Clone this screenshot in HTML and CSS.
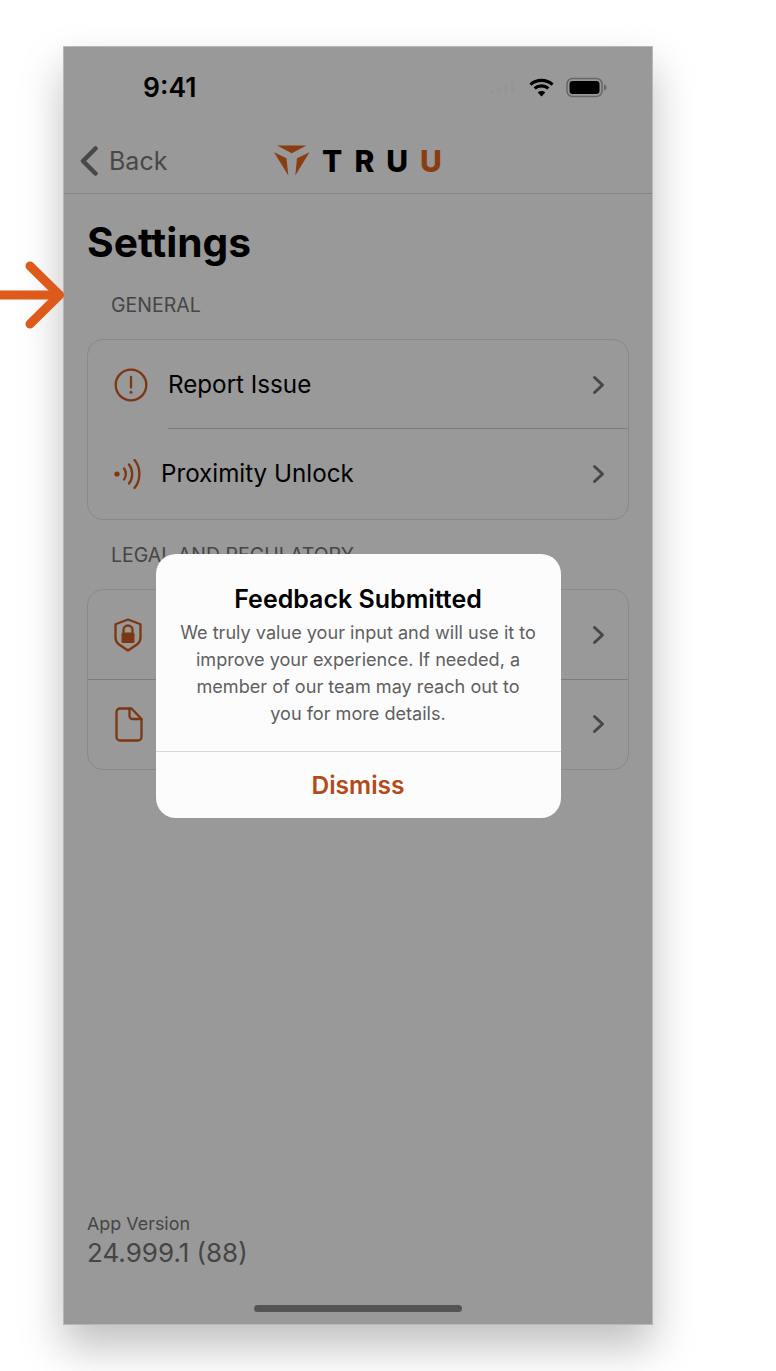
FILE: index.html
```html
<!DOCTYPE html>
<html lang="en">
<head>
<meta charset="utf-8">
<title>Settings</title>
<link rel="stylesheet" href="styles.css">
</head>
<body>
<div class="phone">
  <div class="status">
    <span class="time">9:41</span>
    <div class="status-icons">
      <svg class="signal" width="26" height="14" viewBox="0 0 26 14"><rect x="0" y="10" width="4" height="4" rx="1"/><rect x="7" y="7" width="4" height="7" rx="1"/><rect x="14" y="4" width="4" height="10" rx="1"/><rect x="21" y="1" width="4" height="13" rx="1"/></svg>
      <svg class="wifi" width="25" height="19" viewBox="0 0 25 19"><path d="M1.500 6.600C7.600 1 17.400 1 23.500 6.600"/><path d="M5.600 10.400c3.900-3.400 9.900-3.400 13.800 0"/><path class="wifi-dot" d="M12.500 18.600 8.700 14.400c2.200-1.800 5.400-1.800 7.600 0z"/></svg>
      <svg class="battery" width="41" height="21" viewBox="0 0 41 21"><rect class="batt-shell" x="1" y="1.500" width="35" height="18" rx="5.500"/><rect class="batt-fill" x="3.500" y="4" width="30" height="13" rx="3.200"/><path class="batt-cap" d="M38 7.500c1.600.5 2.500 1.600 2.500 3s-.9 2.500-2.500 3z"/></svg>
    </div>
  </div>
  <header class="nav">
    <div class="back">
      <svg class="back-chevron" width="20" height="30" viewBox="0 0 20 30"><path d="M16.500 2.500 4 15l12.500 12.500"/></svg>
      <span>Back</span>
    </div>
    <div class="logo">
      <svg class="logo-mark" width="36" height="31" viewBox="0 0 36 31"><path d="M3 .5h29.500L17.800 8.200z"/><path d="M0 7.200 12.500 13.200 14.300 30.500z"/><path d="M35.500 7.200 23 13.200 21.300 30.500z"/></svg>
      <span class="logo-text">TRU<span class="logo-accent">U</span></span>
    </div>
    <div></div>
  </header>
  <main class="content">
    <h1 class="title">Settings</h1>
    <h2 class="section-label">GENERAL</h2>
    <section class="card">
      <div class="row">
        <svg class="icon icon-alert" width="34" height="34" viewBox="0 0 34 34"><circle cx="17" cy="17" r="15.300"/><path d="M17 9v10.500"/><circle class="solid" cx="17" cy="24.300" r="1.500"/></svg>
        <span class="row-label label-alert">Report Issue</span>
        <svg class="chevron" width="14" height="20" viewBox="0 0 14 20"><path d="M2.500 2.500 10.500 10l-8 7.500"/></svg>
      </div>
      <div class="row row-split row-prox">
        <svg class="icon icon-prox" width="28" height="30" viewBox="0 0 28 30"><circle class="solid" cx="3" cy="15" r="2.600"/><path d="M10 9.500c2.500 3 2.500 8 0 11"/><path d="M15 5.500c4.200 5.200 4.200 13.800 0 19"/><path d="M20.500 1c6.500 7.500 6.500 20.500 0 28"/></svg>
        <span class="row-label">Proximity Unlock</span>
        <svg class="chevron" width="14" height="20" viewBox="0 0 14 20"><path d="M2.500 2.500 10.500 10l-8 7.500"/></svg>
      </div>
    </section>
    <h2 class="section-label section-label-second">LEGAL AND REGULATORY</h2>
    <section class="card">
      <div class="row">
        <svg class="icon icon-shield" width="28" height="34" viewBox="0 0 28 34"><path d="M14 1.500 26.500 6.300V20c0 3-1 4.500-3.500 6.500L14 32.500 5 26.500C2.500 24.500 1.500 23 1.500 20V6.300z"/><path d="M9.500 14.500v-2.500a4.500 4.500 0 0 1 9 0v2.500"/><rect class="solid" x="7.500" y="14.500" width="13" height="10.500" rx="1.500"/></svg>
        <svg class="chevron" width="14" height="20" viewBox="0 0 14 20"><path d="M2.500 2.500 10.500 10l-8 7.500"/></svg>
      </div>
      <div class="row row-line">
        <svg class="icon icon-doc" width="28" height="35" viewBox="0 0 28 35"><path d="M5 1.500h11.500L26.500 12v18a3.500 3.500 0 0 1-3.500 3.500H5A3.500 3.500 0 0 1 1.500 30V5A3.500 3.500 0 0 1 5 1.500z"/><path d="M14.500 1.500V9a3 3 0 0 0 3 3h9"/></svg>
        <svg class="chevron" width="14" height="20" viewBox="0 0 14 20"><path d="M2.500 2.500 10.500 10l-8 7.500"/></svg>
      </div>
    </section>
  </main>
  <footer class="version">
    <div class="version-label">App Version</div>
    <div class="version-number">24.999.1 (88)</div>
  </footer>
  <div class="home-bar"></div>
  <div class="overlay">
    <div class="dialog">
      <div class="dialog-body">
        <div class="dialog-title">Feedback Submitted</div>
        <p class="dialog-text">We truly value your input and will use it to improve your experience. If needed, a member of our team may reach out to you for more details.</p>
      </div>
      <div class="dialog-action">Dismiss</div>
    </div>
  </div>
</div>
<svg class="pointer" width="70" height="72" viewBox="0 0 70 72"><path d="M0 34h58"/><path d="M30 5 59.500 34 30 63"/></svg>
</body>
</html>
```
FILE: styles.css
```css
* { box-sizing: border-box; }
html, body { margin: 0; height: 100%; }
body {
  background: #fff;
  font-family: Inter, "Noto Sans", sans-serif;
  color: #000;
  overflow: hidden;
  padding: 46px 0 0 63px;
}
.phone {
  position: relative;
  width: 590px;
  height: 1279px;
  background: #fff;
  display: flex;
  flex-direction: column;
  box-shadow: 0 22px 40px rgba(0, 0, 0, 0.25);
}
.status {
  height: 82px;
  flex: none;
  display: flex;
  align-items: center;
  justify-content: space-between;
  padding: 0 46px 0 80px;
}
.time { font-size: 26.500px; font-weight: 600; line-height: 30px; }
.status-icons { display: flex; align-items: center; }
.signal { fill: #fbfbfb; margin-right: 13px; }
.wifi { margin-right: 12px; fill: none; stroke: #000; stroke-width: 3.200; }
.wifi-dot { fill: #000; stroke: none; }
.batt-shell { fill: none; stroke: #aaa; stroke-width: 1.500; }
.batt-fill { fill: #000; }
.batt-cap { fill: #aaa; }
.nav {
  height: 66px;
  flex: none;
  display: grid;
  grid-template-columns: 1fr auto 1fr;
  align-items: center;
  border-bottom: 1px solid #e0e0e0;
  padding: 0 16px;
}
.back { display: flex; align-items: center; gap: 10px; font-size: 25px; color: #787878; }
.back-chevron { fill: none; stroke: #787878; stroke-width: 4.500; stroke-linecap: round; stroke-linejoin: round; }
.logo { display: flex; align-items: center; gap: 12px; }
.logo-mark { fill: #e8661f; }
.logo-text { font-size: 30px; font-weight: 800; letter-spacing: 12px; line-height: 32px; margin-right: -12px; }
.logo-accent { color: #e8661f; }
.content { flex: 1; padding: 22px 24px 0; }
.title { font-size: 40.700px; font-weight: 700; margin: 0; line-height: 54px; }
.section-label {
  margin: 24px 0 0 24px;
  font-size: 19.500px;
  font-weight: 400;
  line-height: 22px;
  color: #747474;
}
.card {
  margin-top: 23px;
  border: 1px solid #e4e4e4;
  border-radius: 16px;
  display: flex;
  flex-direction: column;
}
.row {
  height: 89px;
  flex: none;
  display: flex;
  align-items: center;
  justify-content: space-between;
  padding: 0 22px 0 26px;
  position: relative;
}
.row:last-child { height: 90px; }
.row-split::before,
.row-line::before {
  content: "";
  position: absolute;
  left: 80px;
  right: 0;
  top: -1px;
  border-top: 1px solid #d0d0d0;
}
.row-line::before { left: 0; top: 0; }
.row-label { font-size: 24.200px; flex: 1; line-height: 30px; }
.label-alert { margin-left: 20px; }
.row-prox .row-label { margin-left: 19px; }
.icon { fill: none; stroke: #cf5a1c; stroke-width: 2.300; flex: none; stroke-linecap: round; stroke-linejoin: round; }
.icon .solid { fill: #cf5a1c; stroke: none; }
.icon-doc { margin-left: 1px; }
.chevron { flex: none; fill: none; stroke: #777; stroke-width: 3; stroke-linecap: round; stroke-linejoin: round; }
.version { flex: none; padding: 0 24px; }
.version-label { font-size: 17.900px; line-height: 24px; color: #747474; }
.version-number { font-size: 26px; line-height: 34px; color: #747474; }
.home-bar {
  flex: none;
  align-self: center;
  width: 208px;
  height: 7px;
  margin: 35px 0 13px;
  border-radius: 4px;
  background: #8c8c8c;
}
.overlay {
  position: absolute;
  inset: 0;
  background: rgba(0, 0, 0, 0.4);
  outline: 1px solid rgba(190, 190, 190, 0.8);
  outline-offset: -1px;
  display: flex;
  align-items: center;
  justify-content: center;
}
.dialog {
  width: 405px;
  background: #fcfcfc;
  border-radius: 20px;
  text-align: center;
  display: flex;
  flex-direction: column;
}
.dialog-body { padding: 29px 23.500px 24px; border-bottom: 1px solid #d9d9d9; }
.dialog-title { font-size: 25px; font-weight: 600; line-height: 33px; }
.dialog-text { margin: 3px 0 0; font-size: 18.100px; line-height: 27px; color: #5f5f5f; }
.dialog-action { height: 66px; display: flex; align-items: center; justify-content: center; font-size: 24.500px; font-weight: 600; color: #b24a19; }
.pointer {
  position: absolute;
  left: 0;
  top: 261px;
  fill: none;
  stroke: #dd5a1a;
  stroke-width: 9;
  stroke-linecap: round;
  stroke-linejoin: round;
}
```
